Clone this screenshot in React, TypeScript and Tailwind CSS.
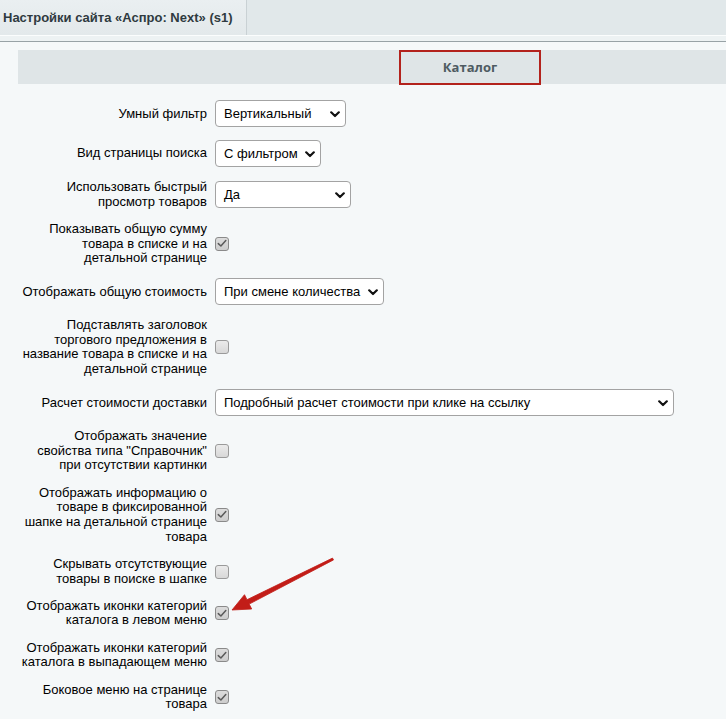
import React from "react";

type Row =
  | { kind: "select"; label: string[]; value: string; width: number }
  | { kind: "check"; label: string[]; checked: boolean };

const rows: Row[] = [
  { kind: "select", label: ["Умный фильтр"], value: "Вертикальный", width: 131 },
  { kind: "select", label: ["Вид страницы поиска"], value: "С фильтром", width: 106 },
  { kind: "select", label: ["Использовать быстрый", "просмотр товаров"], value: "Да", width: 136 },
  { kind: "check", label: ["Показывать общую сумму", "товара в списке и на", "детальной странице"], checked: true },
  { kind: "select", label: ["Отображать общую стоимость"], value: "При смене количества", width: 169 },
  {
    kind: "check",
    label: ["Подставлять заголовок", "торгового предложения в", "название товара в списке и на", "детальной странице"],
    checked: false,
  },
  {
    kind: "select",
    label: ["Расчет стоимости доставки"],
    value: "Подробный расчет стоимости при клике на ссылку",
    width: 459,
  },
  {
    kind: "check",
    label: ["Отображать значение", 'свойства типа "Справочник"', "при отсутствии картинки"],
    checked: false,
  },
  {
    kind: "check",
    label: ["Отображать информацию о", "товаре в фиксированной", "шапке на детальной странице", "товара"],
    checked: true,
  },
  { kind: "check", label: ["Скрывать отсутствующие", "товары в поиске в шапке"], checked: false },
  { kind: "check", label: ["Отображать иконки категорий", "каталога в левом меню"], checked: true },
  { kind: "check", label: ["Отображать иконки категорий", "каталога в выпадающем меню"], checked: true },
  { kind: "check", label: ["Боковое меню на странице", "товара"], checked: true },
];

function Select({ value, width }: { value: string; width: number }) {
  return (
    <div
      className="relative h-[27px] rounded-[4px] border border-[#a3a3a3] bg-white flex items-center pl-[8px] text-[13px] text-black"
      style={{ width }}
    >
      <span className="whitespace-nowrap">{value}</span>
      <svg className="absolute right-[5px] top-[10px]" width="10" height="7" viewBox="0 0 10 7">
        <path d="M1.2 1.3 L5 5 L8.8 1.3" fill="none" stroke="#111" strokeWidth="2.2" strokeLinecap="round" strokeLinejoin="round" />
      </svg>
    </div>
  );
}

function Check({ checked }: { checked: boolean }) {
  return (
    <div
      className={
        "w-[14px] h-[14px] rounded-[3px] border flex items-center justify-center " +
        (checked
          ? "border-[#8a8a8a] bg-gradient-to-b from-[#dcdcdc] to-[#cdcdcd]"
          : "border-[#9a9a9a] bg-gradient-to-b from-[#ebebeb] to-[#d8d8d8]")
      }
    >
      {checked && (
        <svg width="10" height="9" viewBox="0 0 10 9">
          <path d="M1.3 4.6 L3.9 7 L8.8 1.6" fill="none" stroke="#5a5a5a" strokeWidth="1.5" strokeLinecap="round" strokeLinejoin="round" />
        </svg>
      )}
    </div>
  );
}

export default function App() {
  return (
    <div className="relative w-[726px] h-[719px] overflow-hidden bg-[#f5f8f9] font-['Liberation_Sans',Arial,sans-serif]">
      {/* tab strip */}
      <div className="h-[35px] bg-[#e1e8ea] flex">
        <div className="w-[247px] h-full border-r border-[#c9d1d4] bg-gradient-to-b from-[#eaeff1] to-[#e3e9eb] flex items-center pl-[3px] pt-[1px]">
          <span className="text-[13px] font-bold text-[#2f3a3f] whitespace-nowrap">Настройки сайта «Аспро: Next» (s1)</span>
        </div>
      </div>
      <div className="h-[7px] border-t border-[#fbfdfd] bg-[#edf2f3] border-b border-b-[#98a2a6]" />

      <div className="pl-[18px] pt-[8px]">
        {/* section header */}
        <div className="h-[34px] bg-[#dfe5e7] flex">
          <div className="ml-[381px] w-[142px] h-[35px] border-2 border-[#b3221c] flex items-center justify-center">
            <span className="font-['Open_Sans',sans-serif] text-[13px] font-bold text-[#4e5b62]">Каталог</span>
          </div>
        </div>

        <div className="pt-[10px] flex flex-col">
          {rows.map((r, i) => (
            <div key={i} className="flex items-center py-[6.4px]">
              <div className="w-[189px] text-right text-[13px] leading-[14.6px] text-black">
                {r.label.map((l, j) => (
                  <div key={j} className="whitespace-nowrap">{l}</div>
                ))}
              </div>
              <div className="ml-[8px]">
                {r.kind === "select" ? <Select value={r.value} width={r.width} /> : <Check checked={r.checked} />}
              </div>
            </div>
          ))}
        </div>
      </div>

      {/* annotation arrow */}
      <svg className="absolute left-0 top-0 pointer-events-none" width="726" height="719" viewBox="0 0 726 719">
        <polygon
          points="332.5,558.1 247,599.7 244.5,594.7 232,610 251.7,609 249.2,604.1 333.5,559.9"
          fill="#c21d18"
          stroke="#c21d18"
          strokeWidth="0.8"
          strokeLinejoin="round"
        />
      </svg>
    </div>
  );
}
